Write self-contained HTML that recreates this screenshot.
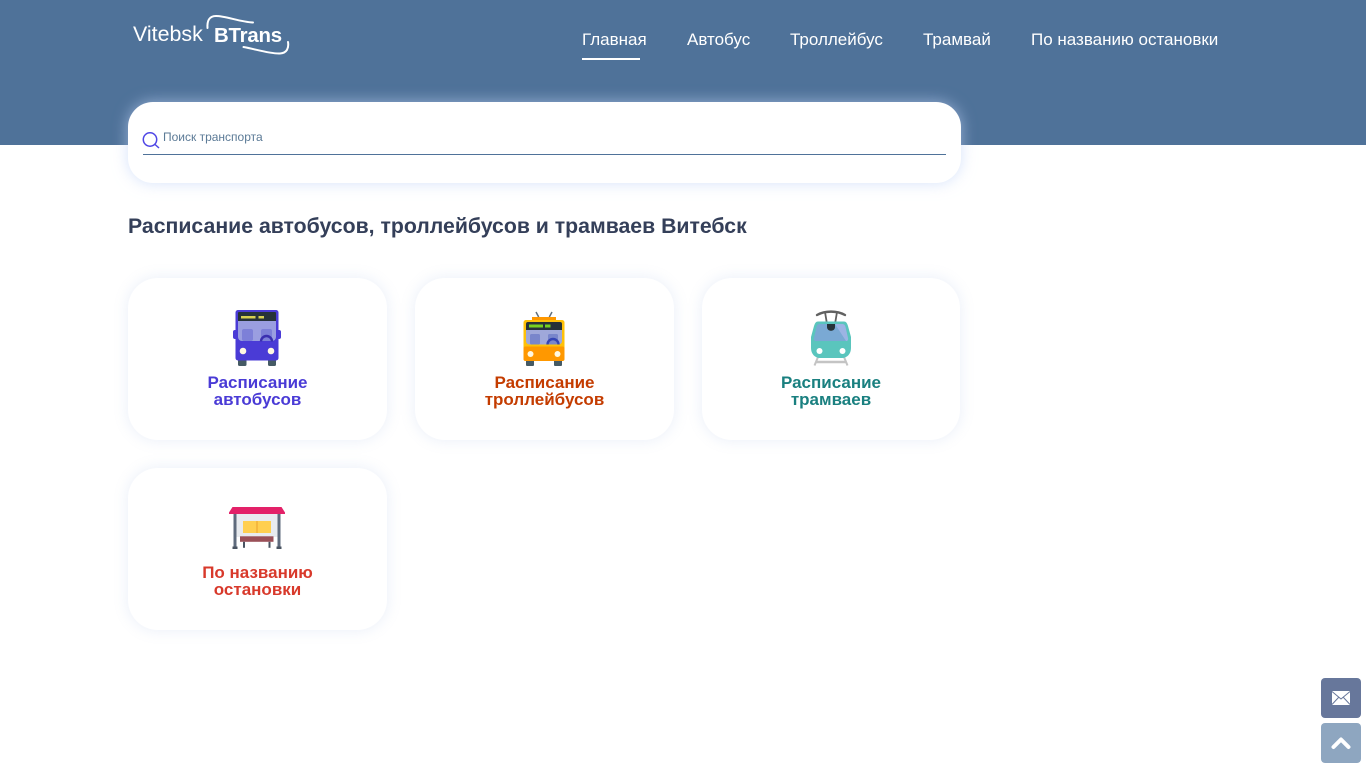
<!DOCTYPE html>
<html lang="ru">
<head>
<meta charset="utf-8">
<title>Vitebsk BTrans</title>
<style>
html,body{margin:0;padding:0;width:1366px;height:768px;overflow:hidden;background:#fff;font-family:"Liberation Sans",sans-serif;}
.hdr{position:absolute;left:0;top:0;width:1366px;height:145px;background:#4f7299;}
.t{position:absolute;white-space:nowrap;}
.nav{top:30px;font-size:17px;line-height:20px;color:#fff;}
.ul{position:absolute;left:582px;top:58px;width:58px;height:2px;background:#fff;}
.search{position:absolute;left:128px;top:102px;width:833px;height:81px;background:#fff;border-radius:25px;box-shadow:0 0 15px rgba(190,210,248,.65);}
.line{position:absolute;left:143px;top:154px;width:803px;height:1px;background:#4f7299;}
h1{position:absolute;left:128px;top:212px;margin:0;font-size:21.25px;line-height:28px;font-weight:bold;color:#343f59;white-space:nowrap;}
.card{position:absolute;width:259px;height:162px;background:#fff;border-radius:30px;box-shadow:0 0 15px rgba(120,150,210,.16);}
.lbl{position:absolute;left:0;right:0;top:96px;text-align:center;font-size:17px;line-height:17px;font-weight:bold;}
.btn{position:absolute;left:1321px;width:40px;height:40px;border-radius:4px;}
svg{position:absolute;left:0;top:0;}
</style>
</head>
<body>
<div class="hdr"></div>
<div class="t" style="left:133px;top:21px;font-size:21.4px;line-height:26px;color:#fff;">Vitebsk</div>
<div class="t" style="left:214px;top:23px;font-size:20.4px;line-height:26px;font-weight:bold;color:#fff;letter-spacing:-.2px;">BTrans</div>
<div class="t nav" style="left:582px;">Главная</div>
<div class="t nav" style="left:687px;">Автобус</div>
<div class="t nav" style="left:790px;">Троллейбус</div>
<div class="t nav" style="left:923px;">Трамвай</div>
<div class="t nav" style="left:1031px;">По названию остановки</div>
<div class="ul"></div>

<div class="search"></div>
<div class="t" style="left:163px;top:129px;font-size:12px;line-height:16px;color:#5b7a96;">Поиск транспорта</div>
<div class="line"></div>

<h1>Расписание автобусов, троллейбусов и трамваев Витебск</h1>

<div class="card" style="left:128px;top:278px;"><div class="lbl" style="color:#4a3bd6;">Расписание<br>автобусов</div></div>
<div class="card" style="left:415px;top:278px;"><div class="lbl" style="color:#c43c00;">Расписание<br>троллейбусов</div></div>
<div class="card" style="left:702px;top:278px;width:258px;"><div class="lbl" style="color:#1a8080;">Расписание<br>трамваев</div></div>
<div class="card" style="left:128px;top:468px;"><div class="lbl" style="color:#d8392b;">По названию<br>остановки</div></div>

<div class="btn" style="top:678px;background:#67779b;"></div>
<div class="btn" style="top:723px;background:#8ea6c0;"></div>

<svg width="1366" height="768" viewBox="0 0 1366 768" fill="none">
  <!-- logo swooshes -->
  <path d="M207.500 28C207 21 209 16 216 16C226 16 240 22 253 22.500" stroke="#fff" stroke-width="2" stroke-linecap="round"/>
  <path d="M243.500 47C255 49 270 54 280 53.500C287 53 289 48 288 42" stroke="#fff" stroke-width="2" stroke-linecap="round"/>

  <!-- search icon -->
  <circle cx="150" cy="139.500" r="6.700" stroke="#4f46e5" stroke-width="1.500"/>
  <path d="M154.500 144L159 148" stroke="#4f46e5" stroke-width="1.500"/>

  <!-- bus -->
  <rect x="238" y="358" width="8.500" height="8" rx="1.500" fill="#455a64"/>
  <rect x="268" y="358" width="8" height="8" rx="1.500" fill="#455a64"/>
  <rect x="233" y="330" width="5" height="9" rx="2" fill="#4a3bd6"/>
  <rect x="276" y="330" width="5" height="9" rx="2" fill="#4a3bd6"/>
  <rect x="235.500" y="310" width="43" height="50.500" rx="2.500" fill="#4a3bd6"/>
  <path d="M238 313a1 1 0 0 1 1-1h36a1 1 0 0 1 1 1v8h-38z" fill="#263238"/>
  <path d="M238 321h38v16a4 4 0 0 1-4 4h-30a4 4 0 0 1-4-4z" fill="#9a9ee0"/>
  <rect x="241" y="316" width="14.500" height="2.500" fill="#d6cf50"/>
  <rect x="258.500" y="316" width="5.500" height="2.500" fill="#d6cf50"/>
  <rect x="242" y="329" width="11" height="12" rx="2" fill="#7d80d8"/>
  <rect x="261" y="329" width="11" height="12" rx="2" fill="#7d80d8"/>
  <path d="M261 341.500a5.500 5.500 0 0 1 11 0" stroke="#3a2fb0" stroke-width="2.400"/>
  <circle cx="243" cy="351" r="3.300" fill="#fff8e1"/>
  <circle cx="271" cy="351" r="3.300" fill="#fff8e1"/>

  <!-- trolleybus -->
  <path d="M538.700 317L536 312M549.300 317L552 312" stroke="#607080" stroke-width="1.500"/>
  <rect x="532" y="317" width="24" height="4" fill="#ff9800"/>
  <rect x="526" y="359" width="8" height="7" rx="1" fill="#455a64"/>
  <rect x="554" y="359" width="8" height="7" rx="1" fill="#455a64"/>
  <rect x="523.500" y="320" width="41" height="41" rx="2.500" fill="#ffc107"/>
  <rect x="523.500" y="346.500" width="41" height="14.500" rx="2" fill="#ff9800"/>
  <path d="M526 324a2 2 0 0 1 2-2h32a2 2 0 0 1 2 2v7h-36z" fill="#263238"/>
  <path d="M526 330h36v11a3.500 3.500 0 0 1-3.500 3.500h-29a3.500 3.500 0 0 1-3.500-3.500z" fill="#9fa8da"/>
  <rect x="529" y="324.500" width="14" height="3" fill="#76d121"/>
  <rect x="545" y="324.500" width="5.500" height="3" fill="#76d121"/>
  <rect x="530" y="334" width="10" height="10.500" rx="1.500" fill="#7986cb"/>
  <rect x="548" y="334" width="10" height="10.500" rx="1.500" fill="#7986cb"/>
  <path d="M547.500 344.500a5.500 5.500 0 0 1 11 0" stroke="#3545b5" stroke-width="2.400"/>
  <circle cx="530.500" cy="354" r="3" fill="#fff8e1"/>
  <circle cx="557.500" cy="354" r="3" fill="#fff8e1"/>

  <!-- tram -->
  <path d="M817 315C825 310.500 837 310.500 845 315" stroke="#616161" stroke-width="2.400" stroke-linecap="round"/>
  <path d="M825 312L827 324M837 312L835 324" stroke="#616161" stroke-width="1.800"/>
  <path d="M818 357L814.500 365.500M844 357L847.500 365.500" stroke="#c4c4c4" stroke-width="2"/>
  <path d="M816 362H846" stroke="#c4c4c4" stroke-width="2.500"/>
  <path d="M818 321.500H844C846 321.500 847 323 848 326L851 337V348C851 354 847 358 842 358H820C815 358 811 354 811 348V337L814 326C815 323 816 321.500 818 321.500Z" fill="#5ac5bd"/>
  <path d="M820 324H842C844 324 845 325 845.500 327L848 338C848.500 340 847.500 341 845.500 341H816.500C814.500 341 813.500 340 814 338L816.500 327C817 325 818 324 820 324Z" fill="#7aa9d4"/>
  <path d="M835 324H842C844 324 845 325 845.500 327L848 338C848.500 340 847.500 341 846 341Z" fill="#9cb4e4"/>
  <path d="M827 324H835V327C835 332 827 332 827 327Z" fill="#263238"/>
  <circle cx="819.500" cy="351" r="3" fill="#fff"/>
  <circle cx="842.500" cy="351" r="3" fill="#fff"/>

  <!-- stop -->
  <rect x="236" y="513" width="42" height="24" fill="#e8ebef"/>
  <path d="M232.500 507H281.500L285 512.500V514H229V512.500Z" fill="#e32168"/>
  <rect x="233.500" y="514" width="3" height="33" fill="#5f6b7d"/>
  <rect x="277.500" y="514" width="3" height="33" fill="#5f6b7d"/>
  <rect x="232.500" y="546.500" width="5" height="2.500" fill="#4a5462"/>
  <rect x="276.500" y="546.500" width="5" height="2.500" fill="#4a5462"/>
  <rect x="243" y="521" width="28" height="12" fill="#ffcf50"/>
  <rect x="256" y="521" width="2" height="12" fill="#f5b83e"/>
  <rect x="240" y="536.300" width="33.500" height="5.500" fill="#9a5058"/>
  <rect x="243" y="541.800" width="2" height="6" fill="#4a5462"/>
  <rect x="268.500" y="541.800" width="2" height="6" fill="#4a5462"/>

  <!-- mail icon -->
  <rect x="1332" y="691" width="18" height="14" fill="#fff"/>
  <path d="M1332 691.500L1341 699L1350 691.500M1332 704.500L1338.500 697.500M1350 704.500L1343.500 697.500" stroke="#67779b" stroke-width="1"/>

  <!-- up chevron -->
  <path d="M1333.500 747L1341 739.500L1348.500 747" stroke="#fff" stroke-width="4" stroke-linecap="round" stroke-linejoin="round"/>
</svg>
</body>
</html>
